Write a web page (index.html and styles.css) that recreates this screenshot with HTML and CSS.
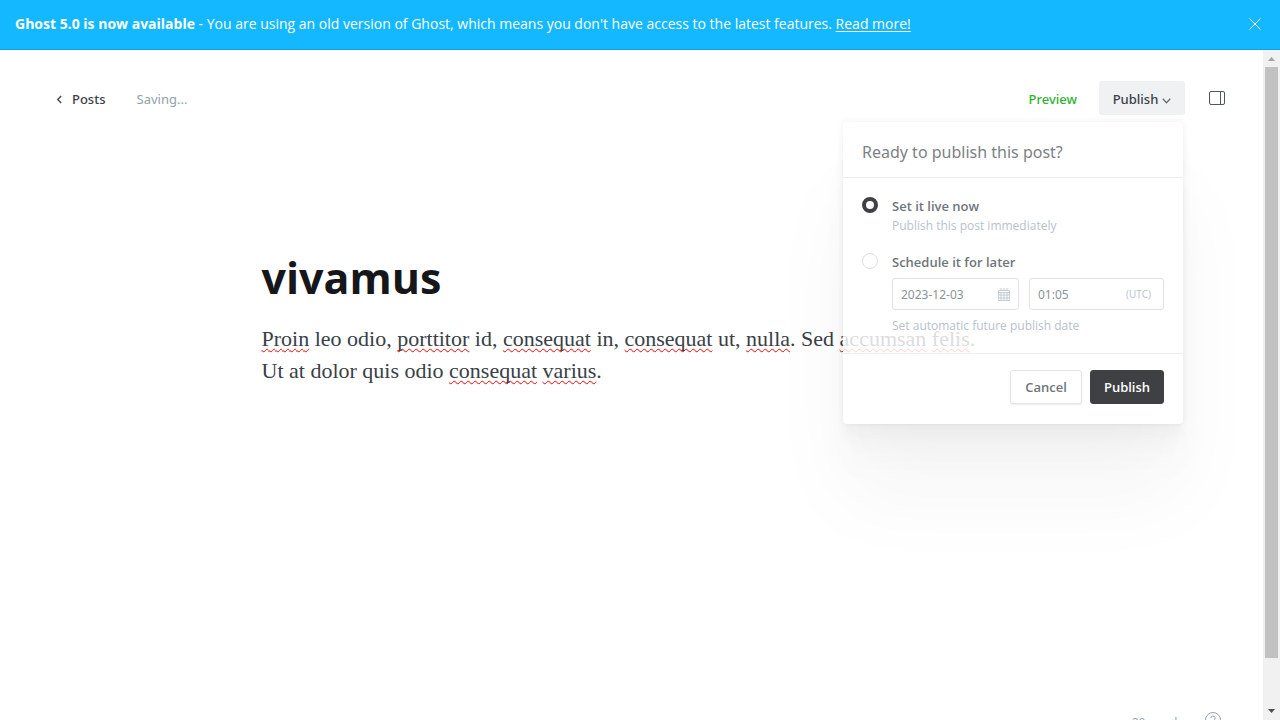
FILE: index.html
```
<!DOCTYPE html>
<html lang="en">
<head>
<meta charset="utf-8">
<title>vivamus - Ghost editor</title>
<link rel="stylesheet" href="styles.css">
</head>
<body>
<aside class="banner">
  <p class="banner-text"><strong>Ghost 5.0 is now available</strong> - You are using an old version of Ghost, which means you don't have access to the latest features. <a href="#">Read more!</a></p>
  <button class="banner-close" type="button" aria-label="Close">
    <svg width="12" height="12" viewBox="0 0 12 12" fill="none" stroke="currentColor"><path d="M.5.5l11 11M11.5.5l-11 11"/></svg>
  </button>
</aside>
<div class="workspace">
  <main class="editor">
    <header class="toolbar">
      <a class="back" href="#">
        <svg width="7" height="9" viewBox="0 0 7 9" fill="none" stroke="currentColor" stroke-width="1.3"><path d="M5.2 1L1.7 4.5 5.2 8"/></svg>
        Posts
      </a>
      <span class="status">Saving...</span>
      <button class="preview" type="button">Preview</button>
      <div class="publish">
        <button class="publish-toggle" type="button" aria-expanded="true">Publish
          <svg width="9" height="6" viewBox="0 0 9 6" fill="none" stroke="currentColor" stroke-width="1.3"><path d="M.8.8l3.7 3.9L8.2.8"/></svg>
        </button>
        <form class="popover">
          <h2 class="popover-title">Ready to publish this post?</h2>
          <div class="options">
            <div class="option">
              <input class="radio" type="radio" name="when" id="now" checked>
              <div class="option-body">
                <label class="option-label" for="now">Set it live now</label>
                <p class="hint">Publish this post immediately</p>
              </div>
            </div>
            <div class="option">
              <input class="radio" type="radio" name="when" id="later">
              <div class="option-body">
                <label class="option-label" for="later">Schedule it for later</label>
                <div class="fields">
                  <div class="field field-date">
                    <input type="text" value="2023-12-03" aria-label="Publish date">
                    <svg width="12" height="13" viewBox="0 0 12 13" fill="none" stroke="currentColor"><path d="M.5 2.5h11v10H.5zM0 4.5h12M0 7h12M0 10h12M3 5v7M6 5v7M9 5v7M3 0v3M6 0v3M9 0v3" stroke-opacity=".8"/></svg>
                  </div>
                  <div class="field field-time">
                    <input type="text" value="01:05" aria-label="Publish time">
                    <span class="zone">(UTC)</span>
                  </div>
                </div>
                <p class="hint">Set automatic future publish date</p>
              </div>
            </div>
          </div>
          <div class="actions">
            <button class="btn" type="button">Cancel</button>
            <button class="btn btn-dark" type="button">Publish</button>
          </div>
        </form>
      </div>
      <button class="settings" type="button" aria-label="Settings">
        <svg width="16" height="14" viewBox="0 0 16 14" fill="none" stroke="currentColor"><rect x=".5" y=".5" width="15" height="13" rx="1.5"/><path d="M11.5 .5v13"/></svg>
      </button>
    </header>
    <article class="post">
      <h1 class="post-title">vivamus</h1>
      <p class="post-text"><span class="typo">Proin</span> leo odio, <span class="typo">porttitor</span> id, <span class="typo">consequat</span> in, <span class="typo">consequat</span> ut, <span class="typo">nulla</span>. Sed <span class="typo">accumsan</span> <span class="typo">felis</span>. Ut at dolor quis odio <span class="typo">consequat</span> <span class="typo">varius</span>.</p>
    </article>
    <footer class="statusbar">
      <span class="count">20 words</span>
      <svg width="18" height="18" viewBox="0 0 18 18" fill="none" stroke="currentColor"><circle cx="9" cy="9" r="7.5"/><path d="M6.8 7.2a2.2 2.2 0 1 1 3.2 2c-.7.4-1 .7-1 1.5M9 12v1"/></svg>
    </footer>
  </main>
  <div class="scrollbar" aria-hidden="true">
    <svg class="arrow-up" width="7" height="4" viewBox="0 0 7 4"><path d="M0 4L3.5 0 7 4z" fill="currentColor"/></svg>
    <div class="track"><div class="thumb"></div></div>
    <svg class="arrow-down" width="7" height="4" viewBox="0 0 7 4"><path d="M0 0h7L3.5 4z" fill="currentColor"/></svg>
  </div>
</div>
</body>
</html>
```
FILE: styles.css
```
* { box-sizing: border-box; }

body {
  margin: 0;
  height: 100vh;
  display: flex;
  flex-direction: column;
  overflow: hidden;
  background: #fff;
  color: #394047;
  font: 13px/20px "Open Sans", "Noto Sans", sans-serif;
}

h1, h2, p { margin: 0; }
button, input { font: inherit; color: inherit; }
button { margin: 0; padding: 0; border: 0; background: none; cursor: pointer; }
svg { display: block; flex: none; }

.banner {
  display: flex;
  align-items: center;
  justify-content: space-between;
  flex: none;
  height: 50px;
  padding: 0 19px 2px 15px;
  border-bottom: 1px solid #0e9fdf;
  background: #14b8ff;
  color: #fff;
  font-size: 14px;
}
.banner a { color: inherit; text-underline-offset: 2px; }

.workspace { flex: 1; min-height: 0; display: flex; }

.editor {
  flex: 1;
  min-width: 0;
  display: flex;
  flex-direction: column;
}

.toolbar {
  position: relative;
  z-index: 1;
  display: flex;
  align-items: center;
  padding: 31px 38px 0 56px;
  font-family: "Noto Sans", sans-serif;
  font-weight: 500;
}
.back {
  display: flex;
  align-items: center;
  gap: 9px;
  padding-top: 2px;
  color: #394047;
  text-decoration: none;
}
.status { margin-left: 31px; padding-top: 2px; color: #95a1ad; font-weight: 400; }
.preview { margin-left: auto; padding-top: 2px; color: #30b130; font-weight: 500; }
.publish { position: relative; margin-left: 22px; }
.publish-toggle {
  display: flex;
  align-items: center;
  justify-content: center;
  gap: 4px;
  width: 86px;
  height: 34px;
  padding-top: 2px;
  border-radius: 3px;
  background: #eff1f3;
  font-weight: 500;
}
.publish-toggle svg { margin-top: 4px; color: #666d74; }
.settings { margin-left: 24px; color: #50585f; }

.popover {
  position: absolute;
  top: 41px;
  right: 2px;
  width: 340px;
  border-radius: 4px;
  background: #fff;
  color: #394047;
  font-family: "Open Sans", "Noto Sans", sans-serif;
  font-weight: 400;
  opacity: 0.82;
  box-shadow:
    0 0 7px rgba(0, 0, 0, 0.07),
    0 2px 2px rgba(0, 0, 0, 0.01),
    0 12px 10px rgba(0, 0, 0, 0.02),
    0 22px 18px rgba(0, 0, 0, 0.02),
    0 42px 34px rgba(0, 0, 0, 0.02),
    0 74px 86px rgba(0, 0, 0, 0.04);
}
.popover-title {
  padding: 19px 19px 14px;
  border-bottom: 1px solid #e8eaed;
  color: #60666c;
  font-family: "Noto Sans", sans-serif;
  font-size: 16px;
  line-height: 22px;
  font-weight: 400;
}
.options {
  display: flex;
  flex-direction: column;
  gap: 16px;
  padding: 18px 19px 17px;
}
.option { display: flex; gap: 14px; }
.option-body { flex: 1; min-width: 0; }
.option-label { display: block; color: #50565d; font-weight: 600; }
.radio {
  appearance: none;
  flex: none;
  width: 16px;
  height: 16px;
  margin: 1px 0 0;
  border: 1px solid #d3dae1;
  border-radius: 50%;
  background: #fff;
}
.radio:checked { border: 4px solid #15171a; }
.hint { color: #aab4bf; font-size: 12px; }
.fields { display: flex; gap: 10px; margin: 6px 0; }
.field {
  display: flex;
  align-items: center;
  height: 32px;
  padding: 0 8px;
  border: 1px solid #d7dce1;
  border-radius: 3px;
  color: #aab4bf;
}
.field-date { width: 127px; }
.field-time { flex: 1; padding-right: 12px; }
.field input {
  flex: 1;
  width: 0;
  min-width: 0;
  padding: 2px 0 0;
  border: 0;
  outline: 0;
  background: none;
  color: #747b82;
  font-family: "Noto Sans", sans-serif;
  font-size: 12px;
}
.zone { font-size: 10px; }

.actions {
  display: flex;
  justify-content: flex-end;
  gap: 8px;
  padding: 16px 19px 20px;
  border-top: 1px solid #e8eaed;
}
.btn {
  width: 72px;
  height: 34px;
  border: 1px solid #dde1e5;
  border-radius: 3px;
  background: #fff;
  box-shadow: 0 1px 2px rgba(0, 0, 0, 0.1);
  color: #50565d;
  font-weight: 600;
}
.btn-dark {
  width: 74px;
  border-color: #15171a;
  background: #15171a;
  box-shadow: none;
  color: #fff;
}

.post {
  flex: 1;
  width: 100%;
  max-width: 740px;
  margin: 0 auto;
  padding-top: 133px;
}
.post-title {
  color: #15171a;
  font-size: 43px;
  line-height: 60px;
  font-weight: 700;
}
.post-text {
  margin-top: 15px;
  font: 22px/32px Georgia, "Liberation Serif", serif;
}
.typo {
  text-decoration: underline wavy #f00 1px;
  text-decoration-skip-ink: none;
  text-underline-offset: 2px;
}

.statusbar {
  display: flex;
  justify-content: flex-end;
  align-items: center;
  gap: 21px;
  height: 7px;
  padding: 14px 41px 0 0;
  color: #95a1ad;
  font-size: 12px;
}
.count { padding-top: 5px; }

.scrollbar {
  flex: none;
  width: 17px;
  display: flex;
  flex-direction: column;
  align-items: center;
  background: #f1f1f1;
}
.arrow-up { margin: 7px 0 6px; color: #a3a3a3; }
.arrow-down { margin: 6px 0 7px; color: #505050; }
.track { flex: 1; width: 13px; }
.thumb { height: 93%; background: #c1c1c1; }
```
